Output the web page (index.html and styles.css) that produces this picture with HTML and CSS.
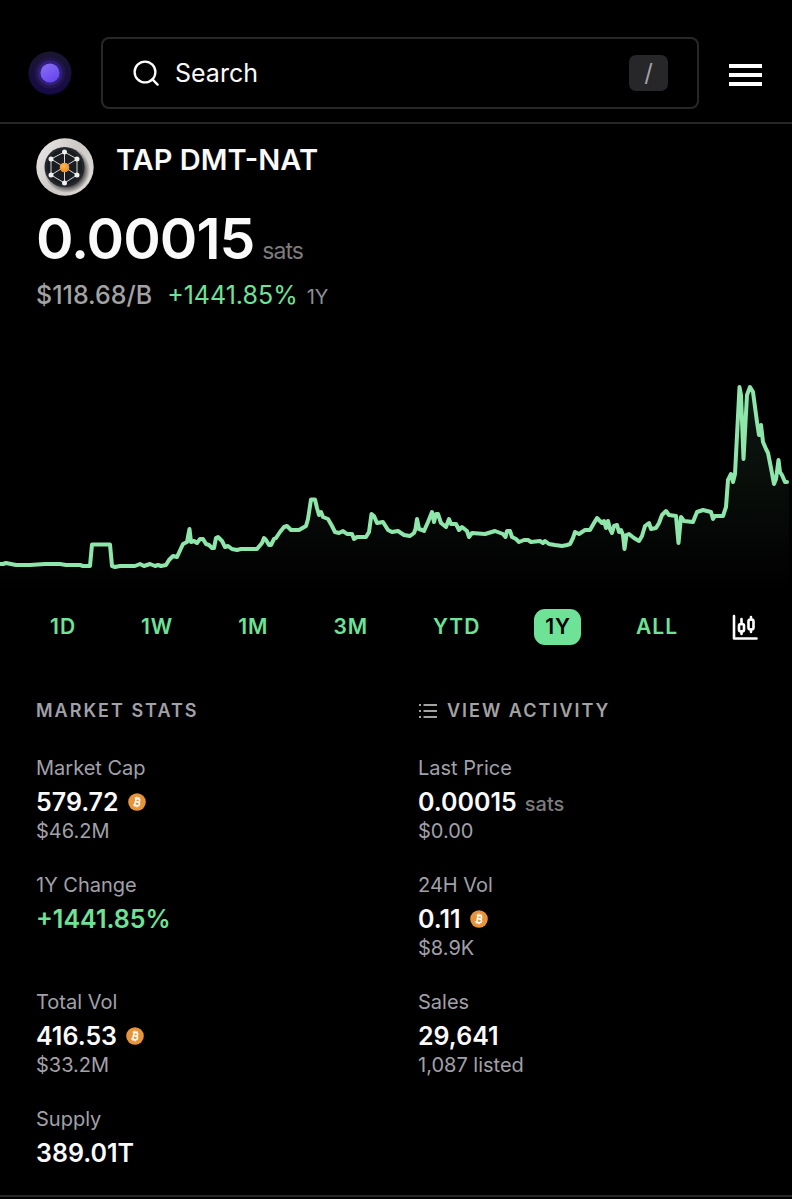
FILE: index.html
```html
<!DOCTYPE html>
<html lang="en">
<head>
<meta charset="utf-8">
<meta name="viewport" content="width=device-width, initial-scale=1">
<title>TAP DMT-NAT</title>
<link rel="stylesheet" href="styles.css">
</head>
<body>
<svg class="defs" width="0" height="0" aria-hidden="true">
  <symbol id="btc" viewBox="0 0 18 18">
    <circle cx="9" cy="9" r="8.8" fill="#e8943a"/>
    <g transform="rotate(12 9 9)" fill="none" stroke="#fff" stroke-width="1.5">
      <path d="M6 5.5h3.6a1.7 1.7 0 0 1 0 3.4H7.3M7.3 8.9h2.8a1.8 1.8 0 0 1 0 3.6H6M7.4 5.5v7"/>
      <path d="M8 3.8v1.7M10 3.8v1.7M8 12.5v1.7M10 12.5v1.7" stroke-width="1.1"/>
    </g>
  </symbol>
</svg>

<header class="topbar">
  <a class="logo" href="#" aria-label="Home">
    <svg viewBox="0 0 44 44">
      <defs>
        <linearGradient id="orb" x1="0" y1="0" x2="0.6" y2="1"><stop offset="0" stop-color="#8c70f4"/><stop offset="1" stop-color="#6847ee"/></linearGradient>
        <linearGradient id="halo" x1="0" y1="0" x2="0" y2="1"><stop offset="0" stop-color="#1a1630"/><stop offset="1" stop-color="#170a48"/></linearGradient>
      </defs>
      <circle cx="22" cy="22" r="21.5" fill="url(#halo)"/>
      <circle cx="22" cy="22" r="15.5" fill="#23164f"/>
      <circle cx="22" cy="22" r="12.5" fill="#30207a"/>
      <circle cx="22" cy="22" r="9.5" fill="url(#orb)"/>
    </svg>
  </a>
  <label class="search">
    <svg class="search-icon" viewBox="0 0 26 26" fill="none" stroke="#fff" stroke-width="2.300" stroke-linecap="round"><circle cx="12" cy="12" r="10.4"/><path d="M19.4 19.4 24.6 24.6"/></svg>
    <input class="search-input" type="text" placeholder="Search" aria-label="Search">
    <kbd class="key">/</kbd>
  </label>
  <button class="menu" type="button" aria-label="Menu">
    <svg viewBox="0 0 33 22" fill="#fff"><path d="M0 0h33v4H0zM0 9h33v4H0zM0 18h33v4H0z"/></svg>
  </button>
</header>

<main>
  <section class="summary">
    <div class="token">
      <svg class="avatar" viewBox="0 0 58 58" aria-hidden="true">
        <defs>
          <linearGradient id="rim" x1="0" y1="0.2" x2="1" y2="0.8"><stop offset="0" stop-color="#e8e6e4"/><stop offset="0.5" stop-color="#cbc8c6"/><stop offset="1" stop-color="#dedbd9"/></linearGradient>
          <radialGradient id="shade"><stop offset="0.6" stop-color="#111"/><stop offset="1" stop-color="#111" stop-opacity="0"/></radialGradient>
          <radialGradient id="core" cx="0.4" cy="0.35"><stop offset="0" stop-color="#ffb85a"/><stop offset="1" stop-color="#f09428"/></radialGradient>
        </defs>
        <circle cx="29" cy="29" r="28.7" fill="url(#rim)"/>
        <circle cx="31" cy="32" r="23" fill="url(#shade)"/>
        <circle cx="28.500" cy="29" r="20" fill="#23262b"/>
        <circle cx="28.500" cy="29" r="17.500" fill="#191c21"/>
        <g fill="none" stroke="#d4d4d4" stroke-width="1">
          <path d="M28.500 14 41 21v16L28.500 45 15 37V21Z"/>
          <path d="M28.500 14v31M15 21l26 16M41 21 15 37"/>
        </g>
        <g fill="#f1efee"><circle cx="28.500" cy="14" r="2.500"/><circle cx="41" cy="21" r="2.500"/><circle cx="41" cy="37" r="2.500"/><circle cx="28.500" cy="45" r="2.500"/><circle cx="15" cy="37" r="2.500"/><circle cx="15" cy="21" r="2.500"/></g>
        <circle cx="28.500" cy="29.500" r="4.800" fill="url(#core)"/>
      </svg>
      <h1 class="name">TAP DMT-NAT</h1>
    </div>
    <p class="price">0.00015 <span class="price-unit">sats</span></p>
    <p class="change"><span class="usd">$118.68/B</span><span class="up">+1441.85%</span><span class="period">1Y</span></p>
  </section>

  <svg class="chart" viewBox="0 0 792 220" preserveAspectRatio="none" role="img" aria-label="Price over one year">
    <defs><linearGradient id="area" x1="0" y1="0" x2="0" y2="1"><stop offset="0" stop-color="#8ee6ab" stop-opacity="0.11"/><stop offset="0.5" stop-color="#8ee6ab" stop-opacity="0.06"/><stop offset="1" stop-color="#8ee6ab" stop-opacity="0"/></linearGradient>
    <path id="line" d="M0 194 3 194 6 193 16 195 30 195 45 194 60 194 66 195 80 195 83 196 90 196 92 174.500 110 174.500 112 196 115 197 120 196 135 196 140 194 144 196 150 194 155 196 158 195 161 196 166 195 169 190 173 186 177 187 183 174 187 172 189.500 159 191 172 194 171 197 173 200 169 203 169 206 174 209 175 212 178 214 178 216 168 218 167 222 171 225 177 228 176 232 179 237 180 241 179 257 179 262 173 264 168 266 170 269 175 271 175 274 169 276 168 280 162 284 157 287 156 291 160 299 160 306 156 308 149 311 129.500 315 129.500 317 138 319 145 321 142 323 147 328 149 332 156 335 162 339 163 343 161 347 164 352 164 354 169 357 167 366 167 369 162 371.500 144 374 146 377 153 383 152 388 160 392 162 398 161 401 163 404 165 410 166 414 163 415.500 159 417 149 419 159 422 160 424 161 428 152 432 142 434 152 436 144 438 144 441 153 446 157 449 149 451 154 456 154 459 160 462 157 467 161 469 167 472 163 485 164 495 161 503 164 505.500 167 507 161 510 161 512 167 516 169 519 172 524 170 528 170 531 172 540 171 543 173 545 171 549 174 555 175 562 176 567 175 570 174 573 168 575 162 579 164 585 160 590 160 594 153 597 148 602 153 604 151 606 158 608 151 610 159 612 163 614 156 617 155 619 162 621 160 623 165 624.500 179 626.500 165 629 164 634 168 639 171 642 166 645 156 649 153 651 159 656 158 659 153 662 145 666 141 669 145 676 146 678.500 173 681 147 684 151 693 152 697 142 703 140 711 142 713 149 715 146 723 146 726 137 728 110 731 104 733 112 735 104 739.500 17 741 25 743.500 89 747 25 750 17 753 22 757 52 759 65 761 55 763 72 766 79 768 83 771 98 774 114 776 109 778.500 90 780 102 782 105 785 112 787 112"/></defs>
    <clipPath id="under"><path d="M0 194 90 196 92 174 110 174 112 196 166 195 183 174 187 172 189 159 194 171 203 169 212 178 218 167 228 176 257 179 287 156 306 156 311 129 315 129 323 147 335 162 366 167 371 144 383 152 414 163 432 142 446 157 462 157 485 164 510 161 519 172 570 174 575 162 597 148 617 155 639 171 645 156 666 141 684 151 703 140 723 146 728 110 735 104 739 17 743 89 747 25 750 17 757 52 766 79 774 114 778 90 782 105 789 112V220H0Z"/></clipPath>
    <rect width="792" height="220" fill="url(#area)" clip-path="url(#under)"/>
    <use href="#line" class="chart-line"/>
  </svg>

  <nav class="ranges" aria-label="Chart range">
    <button class="range" type="button">1D</button>
    <button class="range" type="button">1W</button>
    <button class="range" type="button">1M</button>
    <button class="range" type="button">3M</button>
    <button class="range" type="button">YTD</button>
    <button class="range active" type="button" aria-pressed="true">1Y</button>
    <button class="range" type="button">ALL</button>
    <button class="candles" type="button" aria-label="Candlestick chart">
      <svg viewBox="0 0 26 26" fill="none" stroke="#fff" stroke-width="2.600" stroke-linecap="round" stroke-linejoin="round"><path d="M2 2v22.500h22.500"/><rect x="7" y="10" width="5" height="7.500" rx="2"/><path d="M9.500 5v5M9.500 17.500v2.500"/><rect x="16.500" y="5.500" width="5" height="10" rx="2"/><path d="M19 3v2.500M19 15.500v2.500"/></svg>
    </button>
  </nav>

  <section class="stats">
    <h2 class="heading">MARKET STATS</h2>
    <a class="heading activity" href="#">
      <svg viewBox="0 0 20 16" fill="none" stroke="#a3a3a3" stroke-width="1.800"><path d="M5.500 2H19M5.500 8H19M5.500 14H19"/><path d="M1 2h2M1 8h2M1 14h2"/></svg>
      VIEW ACTIVITY</a>
    <div class="stat"><p class="label">Market Cap</p><p class="value">579.72 <svg class="coin"><use href="#btc"/></svg></p><p class="note">$46.2M</p></div>
    <div class="stat"><p class="label">Last Price</p><p class="value with-unit">0.00015 <span class="unit">sats</span></p><p class="note">$0.00</p></div>
    <div class="stat"><p class="label">1Y Change</p><p class="value up">+1441.85%</p></div>
    <div class="stat"><p class="label">24H Vol</p><p class="value">0.11 <svg class="coin"><use href="#btc"/></svg></p><p class="note">$8.9K</p></div>
    <div class="stat"><p class="label">Total Vol</p><p class="value">416.53 <svg class="coin"><use href="#btc"/></svg></p><p class="note">$33.2M</p></div>
    <div class="stat"><p class="label">Sales</p><p class="value">29,641</p><p class="note">1,087 listed</p></div>
    <div class="stat"><p class="label">Supply</p><p class="value">389.01T</p></div>
  </section>
</main>
</body>
</html>
```
FILE: styles.css
```css
* { box-sizing: border-box; margin: 0; }
body { background: #000; color: #fafafa; font-family: Inter, "Liberation Sans", sans-serif; }
button { border: 0; padding: 0; background: none; font: inherit; cursor: pointer; }
svg { display: block; flex: none; }
a { color: inherit; text-decoration: none; }
.defs { position: absolute; }

.topbar { display: flex; align-items: center; padding: 37px 30px 13px 28px; border-bottom: 2px solid #27272a; }
.logo svg { width: 44px; height: 44px; }
.search { flex: 1; min-width: 0; display: flex; align-items: center; gap: 16px; height: 72px; margin: 0 30px 0 29px; padding: 0 29px 0 30px; border: 2px solid #27272a; border-radius: 8px; }
.search-icon { width: 26px; height: 26px; }
.search-input { flex: 1; min-width: 0; padding: 0; border: 0; outline: 0; background: none; color: #fafafa; font: 400 25px/36px Inter, sans-serif; }
.search-input::placeholder { color: #fafafa; opacity: 1; }
.key { width: 39px; height: 36px; border-radius: 7px; background: #27272a; color: #a1a1aa; font: 400 24px/36px Inter, sans-serif; text-align: center; }
.menu { padding-top: 4px; }
.menu svg { width: 33px; height: 22px; }

.summary { padding: 14px 36px 0; }
.token { display: flex; align-items: flex-start; gap: 22px; }
.avatar { width: 58px; height: 58px; }
.name { font-size: 29px; line-height: 44px; font-weight: 600; }
.price { display: flex; align-items: baseline; gap: 8px; margin-top: 17px; font-size: 57px; line-height: 52px; font-weight: 600; letter-spacing: -1px; }
.price-unit { font-size: 23px; font-weight: 400; color: #7c7c7c; }
.change { display: flex; align-items: baseline; font-size: 25px; line-height: 36px; color: #a3a3a3; }
.up { color: #6ee397; }
.usd { font-weight: 500; }
.change .up { margin: 0 9px 0 15px; }
.period { font-size: 20px; color: #8e8e93; }

.chart { width: 100%; height: 220px; margin-top: 55px; }
.chart-line { fill: none; stroke: #8ee6ab; stroke-width: 4px; stroke-linejoin: round; stroke-linecap: round; }

.ranges { display: flex; justify-content: space-between; align-items: center; padding: 19px 34px 0 39px; }
.range { padding: 0 10px 0 11px; border-radius: 11px; color: #6ee397; font-size: 21px; line-height: 36px; font-weight: 600; letter-spacing: 1px; }
.range.active { background: #6ee397; color: #000; }
.candles svg { width: 26px; height: 26px; }

.stats { display: grid; grid-template-columns: 1fr 1fr; column-gap: 44px; row-gap: 26px; padding: 52px 36px 27px; border-bottom: 2px solid #27272a; }
.heading { font-size: 18px; line-height: 28px; font-weight: 600; letter-spacing: 2px; color: #a1a1aa; margin-bottom: 3px; }
.activity { display: flex; align-items: center; gap: 9px; color: #a3a3a3; }
.activity svg { width: 20px; height: 16px; }
.label, .note { font-size: 20px; line-height: 28px; color: #a1a1aa; }
.value { display: flex; align-items: center; gap: 9px; margin-top: 5px; font-size: 25px; line-height: 30px; font-weight: 600; }
.with-unit { align-items: baseline; gap: 8px; }
.coin { width: 18px; height: 18px; }
.unit { font-size: 20px; line-height: 24px; font-weight: 500; color: #7c7c7c; }
```
